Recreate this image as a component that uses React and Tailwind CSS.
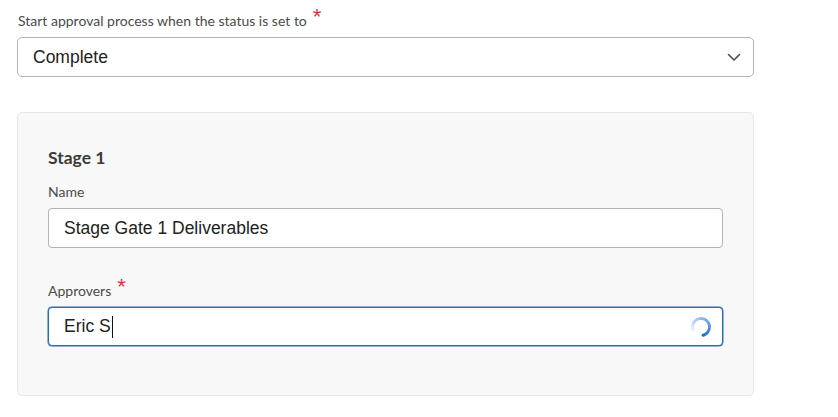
import React from "react";

const Asterisk = () => (
  <span className="ml-[6px] text-[22px] leading-none text-[#d7373f] relative top-[-3px] font-['Liberation_Sans',Arial,sans-serif]">*</span>
);

const Spinner = () => {
  const cx = 11, cy = 11, r = 8.5;
  const start = 153, end = 436, n = 16;
  const segs = [];
  for (let i = 0; i < n; i++) {
    const a0 = ((start + ((end - start) * i) / n) * Math.PI) / 180;
    const a1 = ((start + ((end - start) * (i + 1)) / n + 1) * Math.PI) / 180;
    const d = `M ${cx + r * Math.cos(a0)} ${cy + r * Math.sin(a0)} A ${r} ${r} 0 0 1 ${cx + r * Math.cos(a1)} ${cy + r * Math.sin(a1)}`;
    segs.push(<path key={i} d={d} stroke="#1d6fd6" strokeWidth="2.8" fill="none" opacity={0.06 + (0.94 * (i + 1)) / n} />);
  }
  const ae = (end * Math.PI) / 180;
  return (
    <svg width="22" height="22" viewBox="0 0 22 22">
      {segs}
      <circle cx={cx + r * Math.cos(ae)} cy={cy + r * Math.sin(ae)} r="1.4" fill="#1d6fd6" />
    </svg>
  );
};

export default function App() {
  return (
    <div className="bg-white min-h-[417px] pl-[17px] pt-[10px]">
      <div className="w-[737px]">
        {/* status select */}
        <div className="h-[20px] flex items-center pl-px text-[14px] text-[#4b4b4b] font-[Lato,'Noto_Sans',sans-serif]">
          Start approval process when the status is set to
          <Asterisk />
        </div>
        <div className="mt-[7px] h-[40px] border border-[#b3b3b3] rounded-[5px] flex items-center justify-between pl-[15px] pr-[12px] bg-white">
          <span className="text-[17.5px] text-[#222] font-['Liberation_Sans',Arial,sans-serif]">Complete</span>
          <svg width="14" height="10" viewBox="0 0 14 10">
            <path d="M1.5 2.5 L7 8 L12.5 2.5" stroke="#4b4b4b" strokeWidth="1.6" fill="none" strokeLinecap="round" strokeLinejoin="round" />
          </svg>
        </div>

        {/* stage card */}
        <div className="mt-[35px] bg-[#f8f8f8] border border-[#e8e8e8] rounded-[5px] px-[30px] pt-[33px] pb-[49px]">
          <div className="h-[24px] flex items-center text-[17.5px] font-bold text-[#3c3c3c] font-[Lato,'Noto_Sans',sans-serif]">Stage 1</div>
          <div className="mt-[11px] h-[20px] flex items-center text-[14px] text-[#4b4b4b] font-[Lato,'Noto_Sans',sans-serif]">Name</div>
          <div className="mt-[7px] h-[40px] border border-[#b3b3b3] rounded-[4px] bg-white flex items-center pl-[15px]">
            <span className="text-[17.5px] text-[#222] font-['Liberation_Sans',Arial,sans-serif]">Stage Gate 1 Deliverables</span>
          </div>
          <div className="mt-[32px] h-[20px] flex items-center text-[14px] text-[#4b4b4b] font-[Lato,'Noto_Sans',sans-serif]">
            Approvers
            <Asterisk />
          </div>
          <div className="mt-[7px] h-[39px] border border-[#2b6cb5] shadow-[0_0_0_0.5px_#2b6cb5] rounded-[4px] bg-white flex items-center justify-between pl-[15px] pr-[10px]">
            <span className="flex items-center text-[17.5px] text-[#222] font-['Liberation_Sans',Arial,sans-serif]">
              Eric S
              <span className="w-px h-[22px] bg-[#111] ml-px" />
            </span>
            <Spinner />
          </div>
        </div>
      </div>
    </div>
  );
}
